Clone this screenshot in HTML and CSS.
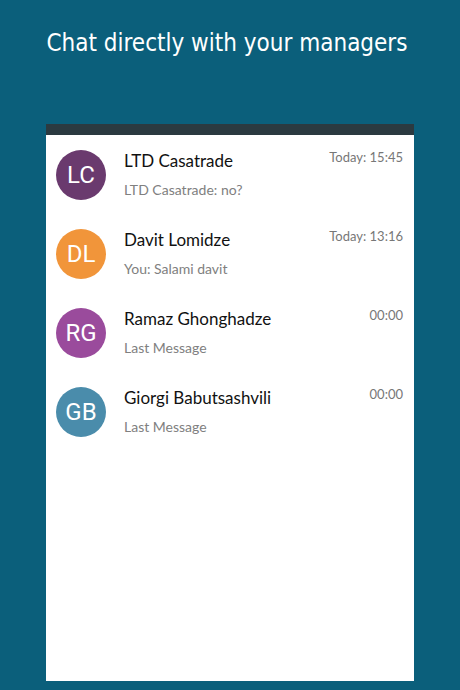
FILE: index.html
```html
<!DOCTYPE html>
<html lang="en">
<head>
  <meta charset="UTF-8">
  <title>Chat with managers</title>
  <meta name="viewport" content="width=device-width, initial-scale=1.0">
  <link rel="stylesheet" href="styles.css">
</head>
<body>

  <h1 class="title">Chat directly with your managers</h1>

  <div class="phone">
    <div class="phone-bar"></div>
    <ul class="chats">
      <li class="chat">
        <div class="avatar avatar-lc">LC</div>
        <div class="chat-body">
          <div class="chat-top">
            <span class="chat-name">LTD Casatrade</span>
            <span class="chat-time">Today: 15:45</span>
          </div>
          <div class="chat-msg">LTD Casatrade: no?</div>
        </div>
      </li>
      <li class="chat">
        <div class="avatar avatar-dl">DL</div>
        <div class="chat-body">
          <div class="chat-top">
            <span class="chat-name">Davit Lomidze</span>
            <span class="chat-time">Today: 13:16</span>
          </div>
          <div class="chat-msg">You: Salami davit</div>
        </div>
      </li>
      <li class="chat">
        <div class="avatar avatar-rg">RG</div>
        <div class="chat-body">
          <div class="chat-top">
            <span class="chat-name">Ramaz Ghonghadze</span>
            <span class="chat-time">00:00</span>
          </div>
          <div class="chat-msg">Last Message</div>
        </div>
      </li>
      <li class="chat">
        <div class="avatar avatar-gb">GB</div>
        <div class="chat-body">
          <div class="chat-top">
            <span class="chat-name">Giorgi Babutsashvili</span>
            <span class="chat-time">00:00</span>
          </div>
          <div class="chat-msg">Last Message</div>
        </div>
      </li>
    </ul>
  </div>

</body>
</html>
```

FILE: styles.css
```css
html, body {
  height: 100%;
}
body {
  margin: 0;
  background-color: #0b5f7b;
  font-family: Lato, "Open Sans", sans-serif;
  display: flex;
  flex-direction: column;
  align-items: center;
}
.title {
  margin: 27px 6px 0 0;
  height: 97px;
  font-family: "DejaVu Sans Condensed", "DejaVu Sans", sans-serif;
  font-weight: normal;
  font-size: 24px;
  line-height: 32px;
  color: #fff;
}
.phone {
  width: 368px;
  height: 557px;
  background: white;
  display: flex;
  flex-direction: column;
}
.phone-bar {
  height: 11px;
  background-color: #2b3a40;
}
.chats {
  list-style: none;
  margin: 0;
  padding: 0;
}
.chat {
  display: flex;
  height: 79px;
  padding: 15px 11px 0 10px;
  box-sizing: border-box;
}
.avatar {
  width: 50px;
  height: 50px;
  border-radius: 50%;
  flex-shrink: 0;
  display: flex;
  align-items: center;
  justify-content: center;
  font-family: Roboto, "Liberation Sans", sans-serif;
  font-size: 24px;
  color: #fff;
}
.avatar-lc { background-color: #6a3a6e; }
.avatar-dl { background-color: #f1953a; }
.avatar-rg { background-color: #9a4b9c; }
.avatar-gb { background-color: #4a8cab; }
.chat-body {
  flex: 1;
  margin-left: 18px;
}
.chat-top {
  display: flex;
  justify-content: space-between;
  align-items: baseline;
}
.chat-name {
  font-size: 17px;
  line-height: 22px;
  color: #111;
}
.chat-time {
  font-size: 13px;
  color: #777;
  position: relative;
  top: -5px;
}
.chat-msg {
  margin-top: 9px;
  font-size: 14px;
  color: #808080;
}
```
